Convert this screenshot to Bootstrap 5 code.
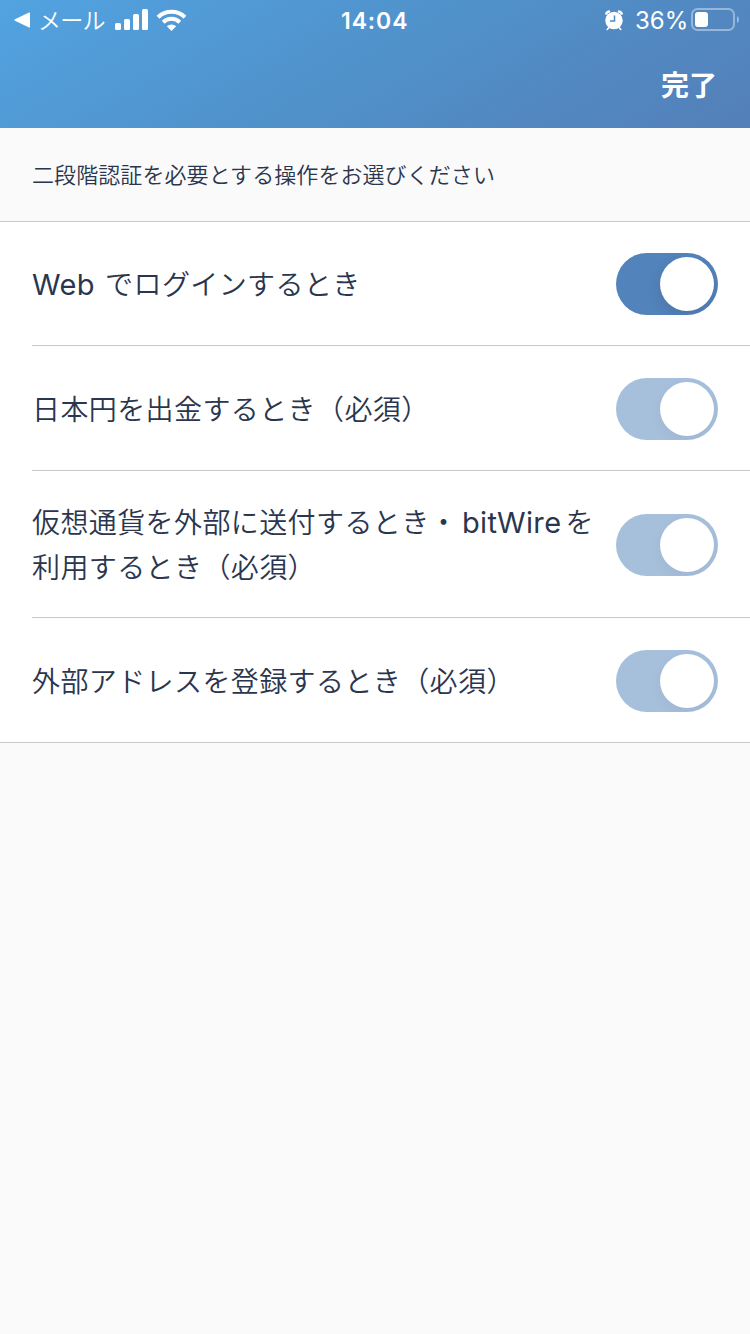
<!DOCTYPE html>
<html lang="ja">
<head>
<meta charset="utf-8">
<meta name="viewport" content="width=device-width, initial-scale=1">
<title>二段階認証</title>
<link href="https://cdn.jsdelivr.net/npm/bootstrap@5.3.0/dist/css/bootstrap.min.css" rel="stylesheet">
<style>
body { font-family: Inter, "Noto Sans CJK JP", sans-serif; background: #fafafa; color: #2a364e; min-height: 1334px; }
.app-header { height: 128px; background: linear-gradient(150deg, #52a3e1 0%, #5091ca 50%, #547fb8 100%); }
.status-bar { height: 40px; padding: 0 11px 0 14px; font-size: 24px; line-height: 40px; }
.back-label { font-size: 23px; font-weight: 350; margin-left: 7px; letter-spacing: -.7px; width: 68px; padding-top: 1px; }
.clock { font-size: 23px; font-weight: 600; letter-spacing: .9px; left: 341px; top: 1px; }
.battery-label { font-weight: 400; font-size: 24px; width: 52px; padding-top: 1px; }
.done { font-size: 28px; font-weight: 700; line-height: 40px; padding-top: 26px; margin-right: 33px; }
.caption-row { height: 93px; padding: 1px 32px 0; font-size: 22px; font-weight: 350; line-height: 92px; letter-spacing: .08px; }
.settings { border-top: 1px solid #c8c8cb; border-bottom: 1px solid #c8c8cb; background: #fff; padding-left: 32px; }
.setting { height: 125px; padding: 2px 32px 0 0; border-bottom: 1px solid #c8c8cb; font-size: 28px; font-weight: 350; line-height: 45px; letter-spacing: .4px; }
.setting > span { padding-top: 2px; }
.setting:first-child { height: 124px; padding-top: 1px; }
.setting:last-child { height: 124px; border-bottom: 0; }
.setting.two-line { height: 147px; }
.latin { font-size: 29px; line-height: 1; font-weight: 400; letter-spacing: .35px; margin-right: 2px; }
.two-line .latin { margin: 0 4px; }
.form-check-input.toggle { appearance: none; width: 102px; height: 62px; margin: 0; border: 0; border-radius: 31px; background: #5383bb; opacity: 1; flex: none; overflow: hidden; position: relative; }
.toggle::before { content: ""; position: absolute; right: 4px; top: 4px; width: 54px; height: 54px; border-radius: 50%; background: #fff; box-shadow: 0 5px 14px rgba(0,0,0,.11); }
.form-check-input.toggle:disabled { background: #a6bfdb; opacity: 1; }
.toggle:disabled::before { box-shadow: 0 5px 14px rgba(0,0,0,.045); }
</style>
</head>
<body>
<header class="app-header text-white">
  <div class="status-bar d-flex align-items-center position-relative">
    <svg width="17" height="16" viewBox="0 0 17 16" fill="#fff"><path d="M1 7.300 15 .5q1-.4 1 .6v13.800q0 1-1 .6L1 8.700q-1.300-.7 0-1.400z"/></svg>
    <span class="back-label text-nowrap">メール</span>
    <svg class="ms-2" width="34" height="22" viewBox="0 0 34 22" fill="#fff"><rect x="1" y="14" width="6" height="7" rx="1.500"/><rect x="10" y="10" width="6" height="11" rx="1.500"/><rect x="19" y="5" width="6" height="16" rx="1.500"/><rect x="28" y="0" width="6" height="21" rx="1.500"/></svg>
    <svg class="ms-2" width="31" height="22" viewBox="0 0 31 22" fill="none" stroke="#fff" stroke-width="4"><path d="M2 8.200a19.500 19.500 0 0 1 27 0M7.200 13.200a12 12 0 0 1 16.600 0"/><path d="M10.800 17.300a7 7 0 0 1 9.400 0L15.500 22z" fill="#fff" stroke="none"/></svg>
    <span class="clock position-absolute">14:04</span>
    <svg class="ms-auto me-2" width="18" height="21" viewBox="0 0 18 21"><g fill="none" stroke="#fff" stroke-width="2.400" stroke-linecap="round"><path d="M1.300 3.600Q2 2 4 1.500M14 1.500Q16 2 16.700 3.600"/><path stroke-width="1.600" d="M4 17.500l-1.800 2M14 17.500l1.800 2"/></g><circle cx="9" cy="10.500" r="8.700" fill="#fff"/><path d="M9.500 5.500V11H5" fill="none" stroke="#508bc4" stroke-width="1.500"/></svg>
    <span class="battery-label text-nowrap ms-1">36%</span>
    <svg class="ms-1" width="48" height="24" viewBox="0 0 48 24"><rect x="1" y="1" width="42" height="21" rx="5.500" fill="none" stroke="#fff" stroke-opacity=".4" stroke-width="2"/><rect x="4" y="4" width="13" height="15" rx="3" fill="#fff"/><path d="M46 8q2 1 2 3.500T46 15z" fill="#fff" fill-opacity=".45"/></svg>
  </div>
  <div class="done text-end">完了</div>
</header>
<main>
  <div class="caption-row text-nowrap">二段階認証を必要とする操作をお選びください</div>
  <div class="settings">
    <div class="setting d-flex align-items-center justify-content-between">
      <span><span class="latin">Web</span> でログインするとき</span>
      <input class="form-check-input toggle" type="checkbox" role="switch" checked>
    </div>
    <div class="setting d-flex align-items-center justify-content-between">
      <span>日本円を出金するとき（必須）</span>
      <input class="form-check-input toggle" type="checkbox" role="switch" checked disabled>
    </div>
    <div class="setting two-line d-flex align-items-center justify-content-between">
      <span class="text-nowrap">仮想通貨を外部に送付するとき・<span class="latin">bitWire</span>を<br>利用するとき（必須）</span>
      <input class="form-check-input toggle" type="checkbox" role="switch" checked disabled>
    </div>
    <div class="setting d-flex align-items-center justify-content-between">
      <span>外部アドレスを登録するとき（必須）</span>
      <input class="form-check-input toggle" type="checkbox" role="switch" checked disabled>
    </div>
  </div>
</main>
<script src="https://cdn.jsdelivr.net/npm/bootstrap@5.3.0/dist/js/bootstrap.bundle.min.js"></script>
</body>
</html>
